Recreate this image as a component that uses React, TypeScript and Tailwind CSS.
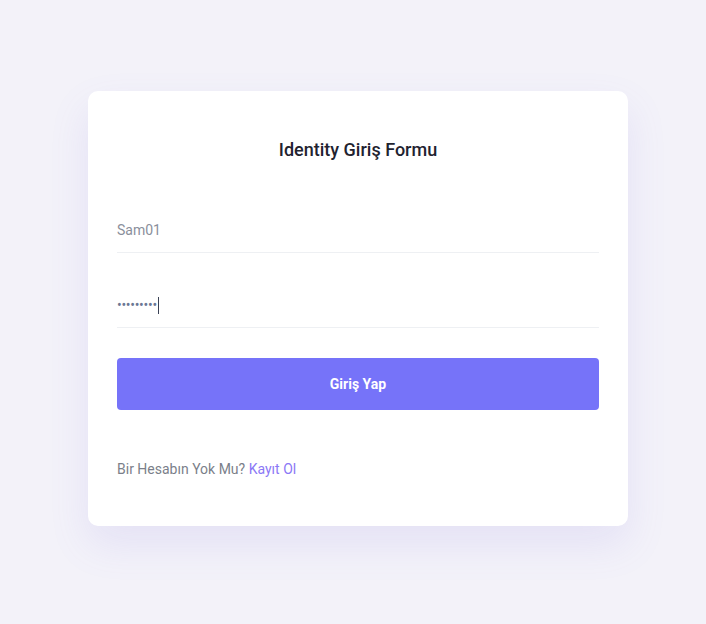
const App = () => {
  return (
    <div
      className="flex min-h-[624px] w-full items-start justify-center bg-[#f3f2f9] pl-[10px] pt-[91px]"
      style={{ fontFamily: "Roboto, 'Liberation Sans', sans-serif" }}
    >
      <div className="w-[540px] rounded-[10px] bg-white px-[29px] pb-[47px] pt-[45px] shadow-[0_18px_40px_rgba(120,110,220,0.12)]">
        <h1 className="text-center text-[18px] font-medium leading-[27px] text-[#1f2330]">Identity Giriş Formu</h1>

        <div className="mt-[46px] flex h-[44px] items-center border-b border-[#eef0f3]">
          <span className="text-[14px] text-[#8a8f9b]">Sam01</span>
        </div>

        <div className="mt-[31px] flex h-[44px] items-center border-b border-[#eef0f3]">
          <span className="text-[14px] tracking-[-0.3px] text-[#6b7894]">•••••••••</span>
          <span className="ml-[1px] h-[17px] w-px bg-[#3a4255]" />
        </div>

        <button className="mt-[30px] flex h-[52px] w-full items-center justify-center rounded-[4px] bg-[#7673f9] text-[14px] font-bold text-white">
          Giriş Yap
        </button>

        <p className="mt-[49px] text-[14px] leading-[20px] text-[#7b7f8a]">
          Bir Hesabın Yok Mu? <a className="text-[#8b78f6]">Kayıt Ol</a>
        </p>
      </div>
    </div>
  );
};

export default App;
